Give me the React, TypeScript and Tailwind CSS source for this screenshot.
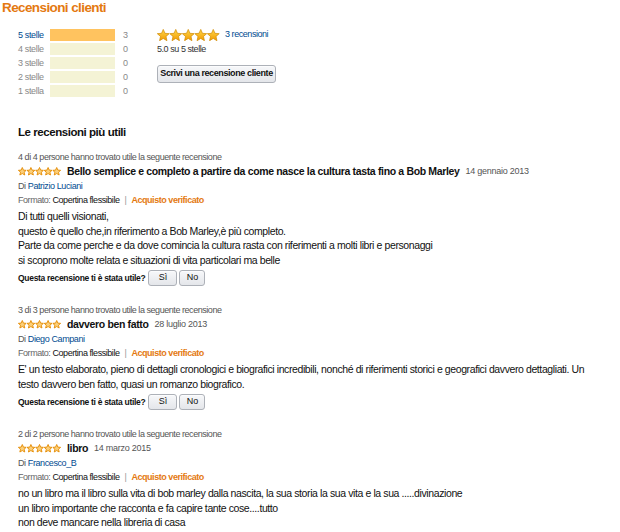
import React from "react";

function BigStar({ x }: { x: number }) {
  return (
    <path
      transform={`translate(${x},0)`}
      d="M6.25 0.4 L7.95 4.3 L12.2 4.65 L9 7.45 L9.95 11.7 L6.25 9.45 L2.55 11.7 L3.5 7.45 L0.3 4.65 L4.55 4.3 Z"
      fill="url(#bg)"
      stroke="#d08a00"
      strokeWidth="0.7"
      strokeLinejoin="round"
    />
  );
}

function BigStars() {
  return (
    <svg width="63" height="12" viewBox="0 0 63 12" className="block">
      <defs>
        <linearGradient id="bg" x1="0" y1="0" x2="0" y2="1">
          <stop offset="0" stopColor="#ffd84a" />
          <stop offset="1" stopColor="#f29a00" />
        </linearGradient>
      </defs>
      {[0, 12.5, 25, 37.5, 50].map((x) => (
        <BigStar key={x} x={x} />
      ))}
    </svg>
  );
}

function SmallStars() {
  return (
    <svg width="43" height="9" viewBox="0 0 43 9" className="block">
      {[0, 8.6, 17.2, 25.8, 34.4].map((x) => (
        <path
          key={x}
          transform={`translate(${x},0)`}
          d="M4.3 0.5 L5.45 3.1 L8.2 3.35 L6.1 5.2 L6.75 8.0 L4.3 6.55 L1.85 8.0 L2.5 5.2 L0.4 3.35 L3.15 3.1 Z"
          fill="#fbcf7a"
          stroke="#e48a00"
          strokeWidth="0.9"
          strokeLinejoin="round"
        />
      ))}
    </svg>
  );
}

function HistRow({ label, count, pct, active }: { label: string; count: number; pct: number; active?: boolean }) {
  return (
    <div className="flex items-center h-[14px]">
      <div
        className={`w-[32px] text-[9px] tracking-[-0.35px] leading-[14px] ${active ? "text-[#004b91]" : "text-[#888]"}`}
      >
        {label}
      </div>
      <div className="w-[65px] h-[12px] bg-[#f4f3d5] relative">
        <div className="absolute left-0 top-0 h-full bg-[#ffc35f]" style={{ width: `${pct}%` }} />
      </div>
      <div className="ml-[8px] text-[9px] leading-[14px] text-[#888]">{count}</div>
    </div>
  );
}

function Btn({ children, className = "" }: { children: React.ReactNode; className?: string }) {
  return (
    <div
      className={`flex items-center justify-center whitespace-nowrap rounded-[3px] border border-[#adb1b8] bg-gradient-to-b from-[#f7f8fa] to-[#e4e6ea] shadow-[inset_0_1px_0_rgba(255,255,255,0.6)] text-[#111] ${className}`}
    >
      {children}
    </div>
  );
}

type Review = {
  helpful: string;
  title: string;
  date: string;
  author: string;
  body: string[];
};

const reviews: Review[] = [
  {
    helpful: "4 di 4 persone hanno trovato utile la seguente recensione",
    title: "Bello semplice e completo a partire da come nasce la cultura tasta fino a Bob Marley",
    date: "14 gennaio 2013",
    author: "Patrizio Luciani",
    body: [
      "Di tutti quelli visionati,",
      "questo è quello che,in riferimento a Bob Marley,è più completo.",
      "Parte da come perche e da dove comincia la cultura rasta con riferimenti a molti libri e personaggi",
      "si scoprono molte relata e situazioni di vita particolari ma belle",
    ],
  },
  {
    helpful: "3 di 3 persone hanno trovato utile la seguente recensione",
    title: "davvero ben fatto",
    date: "28 luglio 2013",
    author: "Diego Campani",
    body: [
      "E' un testo elaborato, pieno di dettagli cronologici e biografici incredibili, nonché di riferimenti storici e geografici davvero dettagliati. Un",
      "testo davvero ben fatto, quasi un romanzo biografico.",
    ],
  },
  {
    helpful: "2 di 2 persone hanno trovato utile la seguente recensione",
    title: "libro",
    date: "14 marzo 2015",
    author: "Francesco_B",
    body: [
      "no un libro ma il libro sulla vita di bob marley dalla nascita, la sua storia la sua vita e la sua .....divinazione",
      "un libro importante che racconta e fa capire tante cose....tutto",
      "non deve mancare nella libreria di casa",
    ],
  },
];

function ReviewBlock({ r, last }: { r: Review; last?: boolean }) {
  return (
    <div className={last ? "" : "mb-[17px]"}>
      <div className="text-[9px] tracking-[-0.45px] leading-[14px] text-[#555]">{r.helpful}</div>
      <div className="flex items-center h-[15px] whitespace-nowrap">
        <SmallStars />
        <span className="ml-[6px] text-[10.5px] tracking-[-0.35px] font-bold text-[#111]">{r.title}</span>
        <span className="ml-[6px] text-[9px] tracking-[-0.25px] text-[#555]">{r.date}</span>
      </div>
      <div className="text-[9px] tracking-[-0.4px] leading-[14px] text-[#555]">
        Di <span className="text-[#004b91]">{r.author}</span>
      </div>
      <div className="text-[9px] tracking-[-0.45px] leading-[14px] text-[#666] whitespace-nowrap">
        Formato: <span className="text-[#111]">Copertina flessibile</span>
        <span className="mx-[5px] text-[#999]">|</span>
        <span className="font-bold text-[#e47911]">Acquisto verificato</span>
      </div>
      <div className="mt-[2px] text-[10.5px] tracking-[-0.4px] leading-[14.5px] text-[#111] whitespace-nowrap">
        {r.body.map((l, i) => (
          <div key={i}>{l}</div>
        ))}
      </div>
      {!last && (
        <div className="mt-[3px] flex items-center h-[16px]">
          <span className="text-[8.5px] tracking-[-0.3px] font-bold text-[#111]">Questa recensione ti è stata utile?</span>
          <Btn className="ml-[3px] w-[29px] h-[16px] text-[9px]">Sì</Btn>
          <Btn className="ml-[2px] w-[26px] h-[16px] text-[9px]">No</Btn>
        </div>
      )}
    </div>
  );
}

export default function App() {
  return (
    <div className="w-[620px] h-[532px] bg-white overflow-hidden font-['Liberation_Sans',Arial,sans-serif] text-[#111]">
      <div className="pl-[2px] pt-[0px] text-[13.5px] tracking-[-0.6px] leading-[16px] font-bold text-[#e47911]">
        Recensioni clienti
      </div>
      <div className="flex pl-[18px] mt-[10px]">
        <div className="mt-[2px]">
          <HistRow label="5 stelle" count={3} pct={100} active />
          <HistRow label="4 stelle" count={0} pct={0} />
          <HistRow label="3 stelle" count={0} pct={0} />
          <HistRow label="2 stelle" count={0} pct={0} />
          <HistRow label="1 stella" count={0} pct={0} />
        </div>
        <div className="ml-[29px] mt-[2px]">
          <div className="flex items-center h-[14px]">
            <BigStars />
            <span className="ml-[5px] text-[9px] tracking-[-0.45px] text-[#004b91]">3 recensioni</span>
          </div>
          <div className="text-[9px] tracking-[-0.45px] leading-[14px] text-[#333]">5.0 su 5 stelle</div>
          <Btn className="mt-[9px] w-[119px] h-[18px] text-[9px] tracking-[-0.4px] font-bold">
            Scrivi una recensione cliente
          </Btn>
        </div>
      </div>
      <div className="pl-[18px] mt-[26px]">
        <div className="text-[11.5px] tracking-[-0.45px] leading-[16px] font-bold text-[#111]">Le recensioni più utili</div>
        <div className="mt-[10px]">
          {reviews.map((r, i) => (
            <ReviewBlock key={i} r={r} last={i === reviews.length - 1} />
          ))}
        </div>
      </div>
    </div>
  );
}
